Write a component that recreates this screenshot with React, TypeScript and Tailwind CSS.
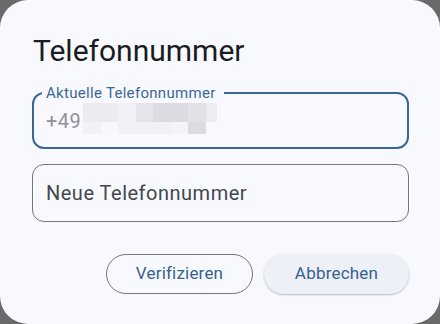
const mosaicTop = [
  'bg-[#ebebf0]',
  'bg-[#ebebf0]',
  'bg-[#f2f2f6]',
  'bg-[#e4e4ea]',
  'bg-[#dcdbe2]',
  'bg-[#dcdbe2]',
  'bg-[#e2e1e7]',
  'bg-[#ececf1]',
];
const mosaicBottom = [
  'bg-[#f2f2f6]',
  'bg-[#f7f8fd]',
  'bg-[#f2f2f6]',
  'bg-[#f2f2f6]',
  'bg-[#f2f2f6]',
  'bg-[#f5f5f9]',
  'bg-[#dcdbe2]',
  'bg-transparent',
];
const cellWidths = ['w-[18px]', 'w-[17px]', 'w-[18px]', 'w-[17px]', 'w-[18px]', 'w-[17px]', 'w-[18px]', 'w-[11px]'];

export default function App() {
  return (
    <div
      className="w-[440px] h-[324px] bg-[#6a6a6a] overflow-hidden"
      style={{ fontFamily: 'Roboto, "Liberation Sans", sans-serif' }}
    >
      <div className="w-full h-full rounded-[28px] bg-[#f8f9ff] pl-8 pr-[31px] pt-[35px] flex flex-col">
        {/* Title */}
        <h1 className="text-[30px] leading-8 text-[#1a1c1e] pl-px">Telefonnummer</h1>

        {/* Current number (focused) */}
        <div className="relative mt-[25px] h-[57px] rounded-[12px] border-2 border-[#3a6796] flex items-center pl-[12px]">
          <span className="absolute left-[8px] -top-[9px] pl-[4px] pr-[8px] bg-[#f8f9ff] text-[15px] leading-4 text-[#3a6796] tracking-[0.3px]">
            Aktuelle Telefonnummer
          </span>
          <span className="text-[20px] text-[#909197] tracking-[0.5px]">+49</span>
          <div className="flex flex-col ml-[2px] -mt-[4px]">
            <div className="flex h-[19px]">
              {mosaicTop.map((c, i) => (
                <div key={i} className={`${c} ${cellWidths[i]}`} />
              ))}
            </div>
            <div className="flex h-[12px]">
              {mosaicBottom.map((c, i) => (
                <div key={i} className={`${c} ${cellWidths[i]}`} />
              ))}
            </div>
          </div>
        </div>

        {/* New number */}
        <div className="mt-[15px] h-[58px] rounded-[12px] border border-[#74777f] flex items-center pl-[13px]">
          <span className="text-[20px] text-[#43474e] tracking-[0.5px]">Neue Telefonnummer</span>
        </div>

        {/* Actions */}
        <div className="mt-[32px] flex justify-end gap-[11px]">
          <button className="w-[147px] h-[40px] rounded-full border border-[#74777f] text-[17px] text-[#36618e] tracking-[0.2px]">
            Verifizieren
          </button>
          <button className="w-[145px] h-[40px] rounded-full bg-[#eef0f8] shadow-[0_1px_2px_rgba(0,0,0,0.25)] text-[17px] text-[#36618e] tracking-[0.2px]">
            Abbrechen
          </button>
        </div>
      </div>
    </div>
  );
}
